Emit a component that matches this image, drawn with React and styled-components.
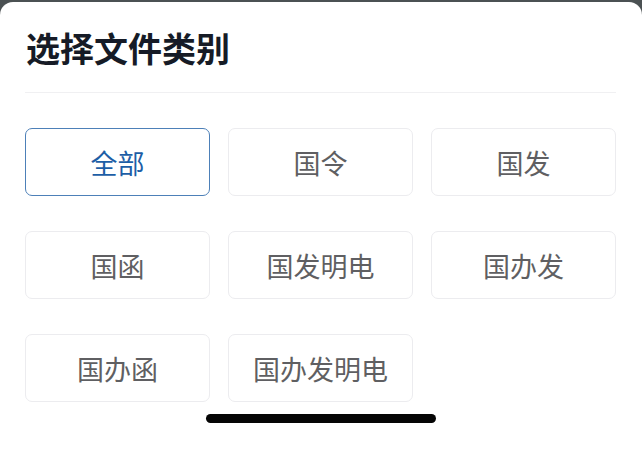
import React, { useState } from 'react'
import styled, { createGlobalStyle } from 'styled-components'

const GlobalStyle = createGlobalStyle`
  html, body {
    margin: 0;
    padding: 0;
    background: #4b5153;
  }
  body {
    font-family: "Noto Sans CJK SC", "Noto Sans", sans-serif;
  }
`

const Sheet = styled.div`
  margin-top: 2px;
  height: 458px;
  background: #ffffff;
  border-radius: 13px 13px 0 0;
  padding: 0 26px 0 25px;
  box-sizing: border-box;
  display: flex;
  flex-direction: column;
`

const Header = styled.div`
  height: 90px;
  display: flex;
  align-items: center;
  padding-left: 1px;
  border-bottom: 1px solid #f0f0f2;
`

const Title = styled.h1`
  margin: 0;
  font-size: 34px;
  font-weight: 700;
  color: #161b26;
  letter-spacing: 0;
`

const Grid = styled.div`
  margin-top: 35px;
  display: grid;
  grid-template-columns: repeat(3, 185px);
  grid-auto-rows: 68px;
  column-gap: 18px;
  row-gap: 35px;
`

const Option = styled.button`
  box-sizing: border-box;
  border: 1px solid ${(p) => (p.$active ? '#4d80b8' : '#ececef')};
  border-radius: 7px;
  background: #ffffff;
  color: ${(p) => (p.$active ? '#1d5ea6' : '#5f5f62')};
  font-family: "Noto Sans CJK SC", "Noto Sans", sans-serif;
  font-size: 27px;
  cursor: pointer;
  padding: 0;
`

const Indicator = styled.div`
  align-self: center;
  margin-top: 12px;
  margin-left: 1px;
  width: 230px;
  height: 9px;
  border-radius: 5px;
  background: #050505;
`

const types = ['全部', '国令', '国发', '国函', '国发明电', '国办发', '国办函', '国办发明电']

const App = () => {
  const [selected, setSelected] = useState('全部')
  return (
    <>
      <GlobalStyle />
      <Sheet>
        <Header>
          <Title>选择文件类别</Title>
        </Header>
        <Grid>
          {types.map((t) => (
            <Option key={t} $active={selected === t} onClick={() => setSelected(t)}>
              {t}
            </Option>
          ))}
        </Grid>
        <Indicator />
      </Sheet>
    </>
  )
}

export default App
